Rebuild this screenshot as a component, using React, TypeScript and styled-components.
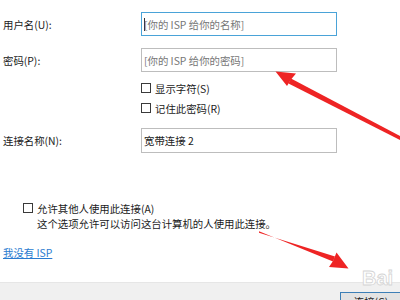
import React from 'react';
import styled, { createGlobalStyle } from 'styled-components';

const GlobalStyle = createGlobalStyle`
  html, body {
    margin: 0;
    padding: 0;
    background: #ffffff;
    overflow: hidden;
  }
  body {
    font-family: "Noto Sans CJK SC", "Noto Sans", "Liberation Sans", sans-serif;
  }
`;

const Page = styled.div`
  position: relative;
  width: 400px;
  height: 300px;
  overflow: hidden;
  background: #ffffff;
  display: flex;
  flex-direction: column;
  color: #1b1b1b;
  font-size: 10.4px;
`;

const Body = styled.div`
  flex: 1;
  display: flex;
  flex-direction: column;
  padding: 12px 0 0 3px;
`;

const FormGrid = styled.div`
  display: grid;
  grid-template-columns: 138px 196px;
  grid-template-rows: 24px 12px 24px 9px 14px 6px 14px 13px 25px;
`;

const Label = styled.div<{ $row: number }>`
  grid-column: 1;
  grid-row: ${(p) => p.$row};
  display: flex;
  align-items: center;
  white-space: nowrap;
`;

const Field = styled.div<{ $row: number; $focused?: boolean; $placeholder?: boolean }>`
  grid-column: 2;
  grid-row: ${(p) => p.$row};
  box-sizing: border-box;
  border: 1px solid ${(p) => (p.$focused ? '#4aa3d8' : '#bdbdbd')};
  display: flex;
  align-items: center;
  padding: 0 2px;
  color: ${(p) => (p.$placeholder ? '#767676' : '#1b1b1b')};
  white-space: nowrap;
`;

const Caret = styled.span`
  display: inline-block;
  width: 1px;
  height: 13px;
  background: #333;
  margin-right: -1px;
`;

const CheckRow = styled.label<{ $row?: number }>`
  grid-column: 2;
  grid-row: ${(p) => p.$row ?? 'auto'};
  display: flex;
  align-items: center;
  gap: 4px;
  white-space: nowrap;
`;

const Box = styled.span`
  width: 10px;
  height: 10px;
  box-sizing: border-box;
  border: 1px solid #3a3a3a;
  background: #fff;
  flex-shrink: 0;
`;

const ShareBlock = styled.div`
  margin-top: 48px;
  padding-left: 20px;
  display: flex;
  flex-direction: column;
`;

const ShareRow = styled.label`
  display: flex;
  align-items: center;
  gap: 4px;
  height: 14px;
  white-space: nowrap;
`;

const Hint = styled.div`
  margin-top: 2px;
  padding-left: 14px;
  height: 14px;
  line-height: 14px;
  white-space: nowrap;
`;

const Link = styled.a`
  margin-top: 15px;
  color: #2a7bd0;
  text-decoration: underline;
  white-space: nowrap;
  line-height: 14px;
`;

const Footer = styled.div`
  height: 18px;
  box-sizing: border-box;
  background: #f0f0f0;
  border-top: 1px solid #e6e6e6;
  display: flex;
  justify-content: flex-end;
  align-items: flex-start;
  padding-top: 9px;
  flex-shrink: 0;
`;

const Button = styled.button`
  width: 62px;
  height: 22px;
  flex-shrink: 0;
  margin-right: -2px;
  box-sizing: border-box;
  border: 1px solid #3d7fb6;
  background: #e3e3e3;
  font-family: inherit;
  font-size: 10.4px;
  line-height: 12px;
  color: #1b1b1b;
  padding: 3px 0 0;
  display: flex;
  justify-content: center;
  align-items: flex-start;
`;

const Watermark = styled.div`
  position: absolute;
  left: 362px;
  top: 268px;
  font-family: "Liberation Sans", Arial, sans-serif;
  font-weight: bold;
  font-size: 20px;
  line-height: 20px;
  color: rgba(255, 255, 255, 0.9);
  -webkit-text-stroke: 0.8px #d4d4d4;
  pointer-events: none;
`;

const Overlay = styled.svg`
  position: absolute;
  left: 0;
  top: 0;
  pointer-events: none;
`;

const Arrows = () => (
  <Overlay width={400} height={300} viewBox="0 0 400 300">
    <g fill="#ee2424">
      <path d="M400 136 L291 78.5 L288.5 83.5 L400 140 Z" />
      <path d="M275.5 71.5 L296 73.5 L291 79.5 L287 86 Z" />
      <path d="M259 231.3 L333 261.5 L335 256.5 L259 232.7 Z" />
      <path d="M348.5 268.5 L329 267 L333 261 L336.5 252.5 Z" />
    </g>
  </Overlay>
);

export default function App() {
  return (
    <Page>
      <GlobalStyle />
      <Body>
        <FormGrid>
          <Label $row={1}>用户名(U):</Label>
          <Field $row={1} $focused $placeholder>
            <Caret />
            [你的 ISP 给你的名称]
          </Field>
          <Label $row={3}>密码(P):</Label>
          <Field $row={3} $placeholder>
            [你的 ISP 给你的密码]
          </Field>
          <CheckRow $row={5}>
            <Box />
            显示字符(S)
          </CheckRow>
          <CheckRow $row={7}>
            <Box />
            记住此密码(R)
          </CheckRow>
          <Label $row={9}>连接名称(N):</Label>
          <Field $row={9}>宽带连接 2</Field>
        </FormGrid>
        <ShareBlock>
          <ShareRow>
            <Box />
            允许其他人使用此连接(A)
          </ShareRow>
          <Hint>这个选项允许可以访问这台计算机的人使用此连接。</Hint>
        </ShareBlock>
        <Link href="#">我没有 ISP</Link>
      </Body>
      <Footer>
        <Button>连接(C)</Button>
      </Footer>
      <Watermark>Bai</Watermark>
      <Arrows />
    </Page>
  );
}
